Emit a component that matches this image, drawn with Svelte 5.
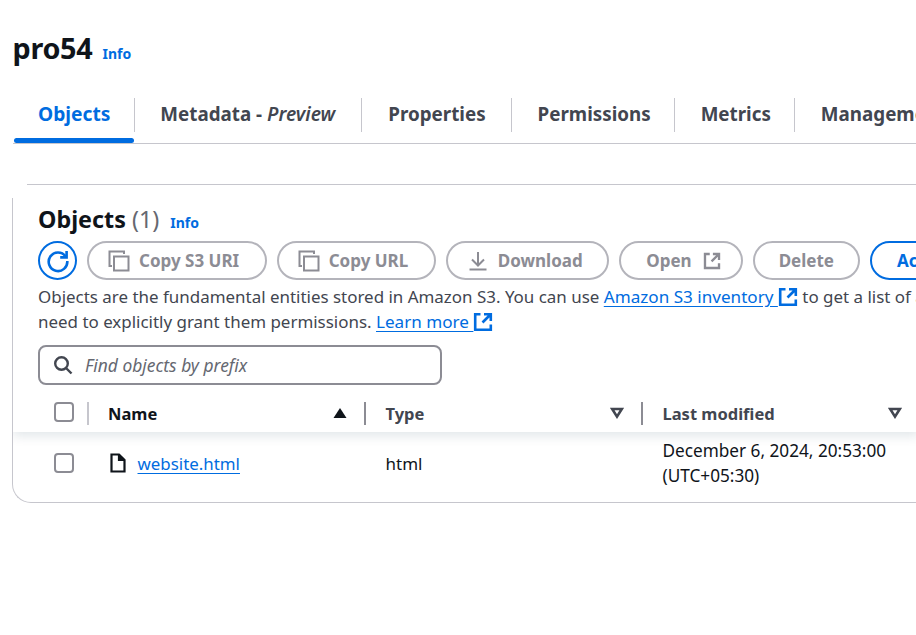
<script lang="ts">
  const tabs = ["Metadata", "Properties", "Permissions", "Metrics", "Management"];
  const columns = [
    { name: "Name", sort: "asc" },
    { name: "Type", sort: "" },
    { name: "Last modified", sort: "" },
  ];
</script>

{#snippet external()}
  <svg class="ext" viewBox="0 0 20 20" width="20" height="20" fill="none" stroke="currentColor" stroke-width="2.6">
    <path d="M7.5 2.2H2.2v15.6h15.6v-5.3" />
    <path d="M11 2.2h6.8V9M17.5 2.5 9.5 10.5" />
  </svg>
{/snippet}

{#snippet copy()}
  <svg viewBox="0 0 22 22" width="22" height="22" fill="none" stroke="currentColor" stroke-width="2">
    <path d="M4 16H1.5V1.5H16V4" />
    <rect x="6" y="6.5" width="14.5" height="14" />
  </svg>
{/snippet}

<div class="page">
  <header class="title">
    <h1>pro54</h1>
    <a class="info" href="#info">Info</a>
  </header>

  <nav class="tabs">
    <span class="tab active">Objects</span>
    {#each tabs as tab}
      <span class="tab" class:meta={tab === "Metadata"}>
        {tab}{#if tab === "Metadata"}&nbsp;-&nbsp;<em>Preview</em>{/if}
      </span>
    {/each}
  </nav>

  <div class="top-line"></div>

  <section class="card">
    <div class="card-head">
      <h2>Objects <span class="count">(1)</span></h2>
      <a class="info" href="#info">Info</a>
    </div>

    <div class="actions">
      <button class="refresh" aria-label="Refresh">
        <svg viewBox="0 0 24 24" width="24" height="24" fill="none" stroke="currentColor" stroke-width="2.6">
          <path d="M19.5 7.2A9.3 9.3 0 1 0 21.3 12" />
          <path d="M20.6 2v6.4h-6.4" />
        </svg>
      </button>
      <button class="btn lead">{@render copy()}Copy S3 URI</button>
      <button class="btn lead">{@render copy()}Copy URL</button>
      <button class="btn lead dl">
        <svg viewBox="0 0 20 20" width="20" height="20" fill="none" stroke="currentColor" stroke-width="2">
          <path d="M10 1v13M4 8.5l6 6 6-6M1.5 18.5h17" />
        </svg>
        Download
      </button>
      <button class="btn trail">Open {@render external()}</button>
      <button class="btn">Delete</button>
      <button class="btn primary">Actions</button>
    </div>

    <p class="desc">
      Objects are the fundamental entities stored in Amazon S3. You can use
      <a href="#inv">Amazon S3 inventory&nbsp;</a><span class="ext-wrap">{@render external()}</span>
      to get a list of all objects in your bucket. For others to access your objects, you'll<br />
      need to explicitly grant them permissions.
      <a href="#more">Learn more&nbsp;</a><span class="ext-wrap">{@render external()}</span>
    </p>

    <div class="search">
      <svg viewBox="0 0 20 20" width="20" height="20" fill="none" stroke="currentColor" stroke-width="2.4">
        <circle cx="8.5" cy="8.5" r="6.3" />
        <path d="m13 13 5.5 5.5" />
      </svg>
      <span>Find objects by prefix</span>
    </div>

    <div class="table">
      <div class="row head">
        <div class="cell check first"><span class="box"></span></div>
        {#each columns as col, i}
          <div class="cell th" class:sep={i > 0}>
            <span class:dark={col.sort === "asc"}>{col.name}</span>
            {#if col.sort === "asc"}
              <svg viewBox="0 0 14 12" width="14" height="12"><path d="M7 1 13.5 11H.5z" fill="#0f141a" /></svg>
            {:else}
              <svg viewBox="0 0 14 12" width="14" height="12" fill="none" stroke="#424650" stroke-width="2.6"><path d="M2.2 2h9.6L7 9.6z" /></svg>
            {/if}
          </div>
        {/each}
      </div>

      <div class="row body">
        <div class="cell check"><span class="box"></span></div>
        <div class="cell name">
          <svg viewBox="0 0 18 20" width="18" height="20" fill="none" stroke="#0f141a" stroke-width="2.2">
            <path d="M2.5 1.5h7.5l5.5 5.5v11.5h-13z" />
            <path d="M10 1.5V7h5.5" fill="#0f141a" />
          </svg>
          <a href="#file">website.html</a>
        </div>
        <div class="cell">html</div>
        <div class="cell date">December 6, 2024, 20:53:00<br />(UTC+05:30)</div>
      </div>
    </div>
  </section>
</div>

<style>
  :global(body) {
    margin: 0;
    background: #fff;
  }
  .page {
    width: 916px;
    height: 635px;
    overflow: hidden;
    font-family: "Noto Sans", "Open Sans", sans-serif;
    font-size: 17px;
    color: #0f141a;
    padding-top: 29px;
    box-sizing: border-box;
  }
  a {
    color: #006ce0;
  }
  .title {
    display: flex;
    align-items: baseline;
    gap: 10px;
    padding-left: 12.5px;
    height: 38px;
  }
  h1 {
    margin: 0;
    font-size: 28.8px;
    line-height: 38px;
    font-weight: 700;
    letter-spacing: -0.3px;
  }
  .info {
    font-size: 14px;
    font-weight: 700;
    text-decoration: none;
  }
  .tabs {
    display: flex;
    margin: 31px 0 0 13px;
    width: 1000px;
    height: 45px;
    border-bottom: 1px solid #c6c6cd;
    white-space: nowrap;
  }
  .tab {
    position: relative;
    flex: none;
    height: 34px;
    padding: 0 24px 0 26px;
    line-height: 32px;
    font-size: 18.8px;
    font-weight: 700;
    color: #424650;
    border-right: 1px solid #c6c6cd;
  }
  .tab em {
    font-weight: 600;
    font-size: 19.2px;
  }
  .tab.meta {
    padding: 0 26px 0 25px;
  }
  .tab:nth-child(3) {
    padding-right: 25px;
  }
  .tab:nth-child(4),
  .tab:nth-child(5) {
    padding-right: 23px;
  }
  .tab:last-child {
    border-right: 0;
  }
  .tab.active {
    color: #006ce0;
    font-size: 19.2px;
    padding-left: 25px;
  }
  .tab.active::after {
    content: "";
    position: absolute;
    left: 1px;
    right: 0;
    top: 40px;
    height: 5px;
    border-radius: 3px;
    background: #006ce0;
  }
  .top-line {
    height: 1px;
    margin: 40px 0 0 27px;
    background: #c6c6cd;
  }
  .card {
    width: 1100px;
    margin: 13px 0 0 12px;
    height: 305px;
    box-sizing: border-box;
    border-left: 1px solid #c6c6cd;
    border-bottom: 1px solid #c6c6cd;
    border-bottom-left-radius: 19px;
    padding-left: 25px;
  }
  .card-head {
    display: flex;
    align-items: baseline;
    gap: 11px;
    height: 34px;
    padding-top: 4px;
  }
  h2 {
    margin: 0;
    font-size: 23.3px;
    line-height: 34px;
    font-weight: 700;
  }
  .count {
    font-weight: 400;
    color: #656871;
  }
  .actions {
    display: flex;
    gap: 10px;
    margin-top: 5px;
    white-space: nowrap;
  }
  button {
    font: inherit;
    background: #fff;
  }
  .refresh {
    width: 39px;
    height: 39px;
    padding: 0;
    border: 2px solid #006ce0;
    border-radius: 50%;
    color: #006ce0;
    display: flex;
    align-items: center;
    justify-content: center;
  }
  .btn {
    display: flex;
    align-items: center;
    gap: 9px;
    height: 39px;
    padding: 0 24px;
    border: 2px solid #b4b4bb;
    border-radius: 20px;
    color: #8c8c94;
    font-weight: 700;
    font-size: 17px;
  }
  .btn.lead {
    padding: 0 25.5px 0 19px;
  }
  .btn.dl {
    padding: 0 24.5px 0 20px;
    gap: 10px;
  }
  .btn.trail {
    padding: 0 20px 0 25px;
    gap: 11px;
  }
  .btn .ext {
    width: 18px;
    height: 18px;
  }
  .btn.primary {
    color: #006ce0;
    border-color: #006ce0;
    padding-left: 25px;
  }
  .desc {
    margin: 4px 0 0;
    font-size: 16.95px;
    line-height: 25px;
    color: #424650;
    white-space: nowrap;
  }
  .desc a {
    font-size: 17.1px;
    text-underline-offset: 3px;
  }
  .ext-wrap {
    display: inline-block;
    color: #006ce0;
    vertical-align: -4px;
    line-height: 0;
  }
  .ext {
    display: inline-block;
  }
  .search {
    display: flex;
    align-items: center;
    gap: 12px;
    width: 404px;
    height: 40px;
    margin-top: 11px;
    padding-left: 13px;
    box-sizing: border-box;
    border: 2px solid #8c8c94;
    border-radius: 8px;
    color: #424650;
  }
  .search span {
    font-style: italic;
    font-size: 17.4px;
    color: #656871;
  }
  .table {
    margin: 17px 0 0 -25px;
  }
  .row {
    display: grid;
    grid-template-columns: 74px 277px 277px 278px;
    width: 906px;
  }
  .row.head {
    height: 30px;
    position: relative;
    background: #fff;
    box-shadow: 0 4px 12px rgba(0, 47, 71, 0.12);
    clip-path: inset(0 0 -30px 0);
    align-items: start;
  }
  .cell {
    padding-left: 21.5px;
    box-sizing: border-box;
  }
  .check {
    padding-left: 41px;
    position: relative;
  }
  .box {
    display: block;
    width: 20px;
    height: 20px;
    box-sizing: border-box;
    border: 2px solid #8c8c94;
    border-radius: 4px;
    background: #fff;
  }
  .th {
    display: flex;
    align-items: center;
    justify-content: space-between;
    height: 22px;
    padding-right: 17px;
    font-size: 16.5px;
    font-weight: 700;
    color: #424650;
    position: relative;
  }
  .th:not(.sep) {
    padding-left: 21px;
  }
  .th .dark {
    color: #0f141a;
  }
  .th.sep::before,
  .check.first::after {
    content: "";
    position: absolute;
    left: 0;
    top: 0;
    width: 2px;
    height: 23px;
    background: #8c8c94;
  }
  .check.first::after {
    left: 74px;
    background: #c6c6cd;
  }
  .row.body {
    align-items: center;
    height: 70px;
    padding-bottom: 8px;
    box-sizing: border-box;
  }
  .date {
    line-height: 25px;
    font-size: 17.2px;
  }
  .name {
    display: flex;
    align-items: center;
    gap: 11px;
  }
  .name a {
    font-size: 16.9px;
    text-underline-offset: 3px;
  }
</style>
